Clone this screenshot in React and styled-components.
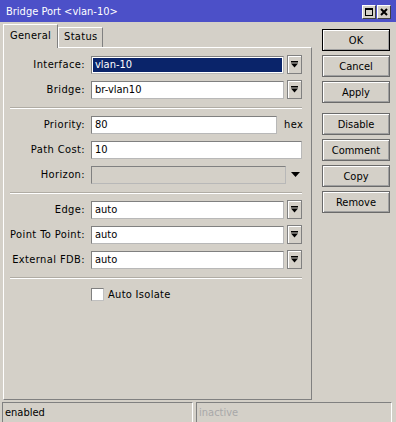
import React from "react";
import styled, { createGlobalStyle } from "styled-components";

const GlobalStyle = createGlobalStyle`
  html, body {
    margin: 0;
    padding: 0;
    background: #d4d0c8;
  }
  body {
    font-family: "DejaVu Sans Condensed", "DejaVu Sans", sans-serif;
    font-stretch: condensed;
    font-size: 11px;
    color: #000;
  }
`;

const Window = styled.div`
  width: 396px;
  height: 422px;
  display: flex;
  flex-direction: column;
  background: #d4d0c8;
  overflow: hidden;
`;

const TitleBar = styled.div`
  height: 22px;
  flex: none;
  background: #4c50c8;
  color: #fff;
  display: flex;
  align-items: center;
  padding: 1px 5px 0 6px;
  box-sizing: border-box;
`;

const Title = styled.div`
  flex: 1;
  font-size: 11px;
`;

const TitleButton = styled.div`
  width: 14px;
  height: 14px;
  box-sizing: border-box;
  margin-left: 1px;
  background: #d4d0c8;
  border: 1px solid #404040;
  border-top-color: #fff;
  border-left-color: #fff;
  display: flex;
  align-items: center;
  justify-content: center;
`;

const Body = styled.div`
  flex: 1;
  display: flex;
  min-height: 0;
`;

const LeftCol = styled.div`
  width: 309px;
  margin-left: 3px;
  padding-top: 2px;
  display: flex;
  flex-direction: column;
`;

const TabBar = styled.div`
  height: 23px;
  display: flex;
  align-items: flex-end;
`;

const Tab = styled.div`
  box-sizing: border-box;
  height: ${p => (p.active ? "24px" : "20px")};
  padding: ${p => (p.active ? "4px 6px 0 6px" : "2px 5px 0 5px")};
  border-top: 1px solid #fff;
  border-left: 1px solid #fff;
  border-right: 1px solid #808080;
  margin-bottom: ${p => (p.active ? "-1px" : "0")};
  background: #d4d0c8;
  position: relative;
  z-index: ${p => (p.active ? 1 : 0)};
  letter-spacing: 0.3px;
`;

const Panel = styled.div`
  flex: 1;
  border-top: 1px solid #fff;
  border-left: 1px solid #fff;
  border-right: 1px solid #808080;
  border-bottom: 1px solid #808080;
  padding: 7px 9px 0 0;
  display: flex;
  flex-direction: column;
`;

const Row = styled.div`
  height: 19px;
  display: flex;
  align-items: center;
  margin-bottom: 6px;
`;

const Label = styled.div`
  width: 81px;
  margin-right: 6px;
  text-align: right;
  white-space: nowrap;
  letter-spacing: 0.4px;
  flex: none;
`;

const Field = styled.div`
  flex: 1;
  height: 18px;
  box-sizing: border-box;
  border: 1px solid #808080;
  border-right-color: #b8b8b8;
  border-bottom-color: #b8b8b8;
  background: ${p => (p.disabled ? "#d4d0c8" : p.selected ? "#0a246a" : "#fff")};
  color: ${p => (p.selected ? "#fff" : "#000")};
  box-shadow: ${p => (p.selected ? "inset 0 0 0 1px #fff" : "none")};
  padding-left: 3px;
  display: flex;
  align-items: center;
  white-space: nowrap;
`;

const DropButton = styled.div`
  width: 15px;
  height: 19px;
  box-sizing: border-box;
  margin-left: 3px;
  border: 1px solid #808080;
  box-shadow: inset 1px 1px 0 #fff;
  display: flex;
  align-items: center;
  justify-content: center;
  flex: none;
`;

const Suffix = styled.div`
  width: 25px;
  padding-left: 7px;
  box-sizing: border-box;
  letter-spacing: 0.4px;
  flex: none;
`;

const ArrowSlot = styled.div`
  width: 16px;
  padding-left: 5px;
  box-sizing: border-box;
  display: flex;
  align-items: center;
  flex: none;
`;

const Separator = styled.div`
  height: 1px;
  border-bottom: 1px solid #fff;
  background: #b0aca4;
  margin: 2px 0 6px 6px;
`;

const CheckRow = styled.div`
  display: flex;
  align-items: center;
  padding-left: 87px;
  height: 19px;
  letter-spacing: 0.3px;
`;

const CheckBox = styled.div`
  width: 13px;
  height: 13px;
  box-sizing: border-box;
  background: #fff;
  border: 1px solid #808080;
  border-right-color: #c0c0c0;
  border-bottom-color: #c0c0c0;
  margin-right: 4px;
`;

const RightCol = styled.div`
  padding: 7px 0 0 10px;
  display: flex;
  flex-direction: column;
`;

const Button = styled.div`
  width: 68px;
  height: 22px;
  box-sizing: border-box;
  border: 1px solid ${p => (p.primary ? "#000" : "#6a6a6a")};
  box-shadow: inset 1px 1px 0 #fff, inset -1px -1px 0 #a0a0a0;
  display: flex;
  align-items: center;
  justify-content: center;
  margin-bottom: ${p => (p.groupEnd ? "10px" : "4px")};
`;

const StatusBar = styled.div`
  height: 20px;
  flex: none;
  margin-top: 2px;
  display: flex;
  gap: 3px;
  padding: 0 4px 0 2px;
`;

const StatusCell = styled.div`
  flex: ${p => p.grow};
  box-sizing: border-box;
  border-top: 1px solid #808080;
  border-left: 1px solid #808080;
  border-right: 1px solid #fff;
  padding: 3px 0 0 2px;
  color: ${p => (p.dim ? "#a8a8a8" : "#000")};
`;

const DropIcon = () => (
  <svg width="7" height="7" viewBox="0 0 7 7">
    <rect x="0" y="0" width="7" height="1.5" fill="#000" />
    <polygon points="0,2.5 7,2.5 3.5,6.5" fill="#000" />
  </svg>
);

const DownArrow = () => (
  <svg width="9" height="5" viewBox="0 0 9 5">
    <polygon points="0,0 9,0 4.5,5" fill="#000" />
  </svg>
);

const Combo = ({ label, value, selected }) => (
  <Row>
    <Label>{label}</Label>
    <Field selected={selected}>{value}</Field>
    <DropButton>
      <DropIcon />
    </DropButton>
  </Row>
);

export default function App() {
  return (
    <Window>
      <GlobalStyle />
      <TitleBar>
        <Title>Bridge Port &lt;vlan-10&gt;</Title>
        <TitleButton>
          <svg width="8" height="8" viewBox="0 0 8 8">
            <rect x="0.5" y="0.5" width="7" height="7" fill="none" stroke="#000" />
            <rect x="0" y="0" width="8" height="2" fill="#000" />
          </svg>
        </TitleButton>
        <TitleButton>
          <svg width="8" height="8" viewBox="0 0 8 8">
            <path d="M1 1 L7 7 M7 1 L1 7" stroke="#000" strokeWidth="2" />
          </svg>
        </TitleButton>
      </TitleBar>
      <Body>
        <LeftCol>
          <TabBar>
            <Tab active>General</Tab>
            <Tab>Status</Tab>
          </TabBar>
          <Panel>
            <Combo label="Interface:" value="vlan-10" selected />
            <Combo label="Bridge:" value="br-vlan10" />
            <Separator />
            <Row>
              <Label>Priority:</Label>
              <Field>80</Field>
              <Suffix>hex</Suffix>
            </Row>
            <Row>
              <Label>Path Cost:</Label>
              <Field>10</Field>
            </Row>
            <Row>
              <Label>Horizon:</Label>
              <Field disabled />
              <ArrowSlot>
                <DownArrow />
              </ArrowSlot>
            </Row>
            <Separator />
            <Combo label="Edge:" value="auto" />
            <Combo label="Point To Point:" value="auto" />
            <Combo label="External FDB:" value="auto" />
            <Separator />
            <CheckRow>
              <CheckBox />
              Auto Isolate
            </CheckRow>
          </Panel>
        </LeftCol>
        <RightCol>
          <Button primary>OK</Button>
          <Button>Cancel</Button>
          <Button groupEnd>Apply</Button>
          <Button>Disable</Button>
          <Button>Comment</Button>
          <Button>Copy</Button>
          <Button>Remove</Button>
        </RightCol>
      </Body>
      <StatusBar>
        <StatusCell grow="191">enabled</StatusCell>
        <StatusCell grow="196" dim>inactive</StatusCell>
      </StatusBar>
    </Window>
  );
}
